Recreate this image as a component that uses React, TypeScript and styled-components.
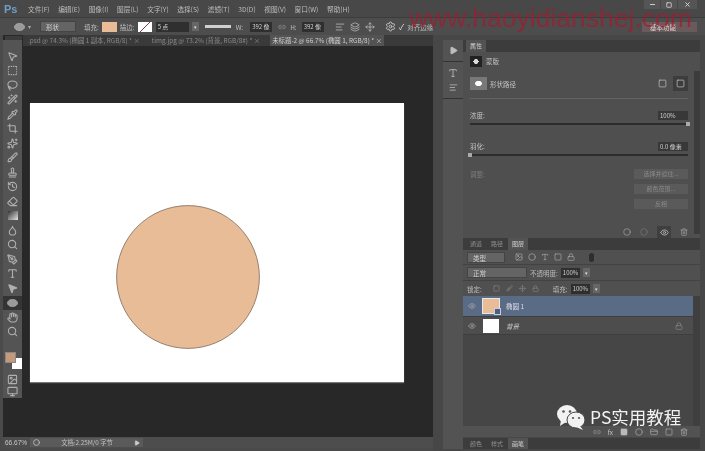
import React from "react";
import styled, { createGlobalStyle } from "styled-components";
import {
  Brush,
  Circle,
  Crop,
  Droplet,
  Eraser,
  Eye,
  FolderClosed,
  Hand,
  History,
  Link2,
  Lasso,
  Lock,
  Minus,
  Move,
  PenTool,
  Pipette,
  Search,
  Settings,
  SquareDashed,
  Stamp,
  Trash2,
  Type,
  Wand2,
  MousePointer2,
  Sparkles,
  AlignLeft,
  Layers,
  Image as ImageIcon,
  Square,
  Monitor,
  Play,
  X,
} from "lucide-react";

const GlobalStyle = createGlobalStyle`
  html, body {
    margin: 0;
    padding: 0;
    background: #4a4a4a;
  }
  body {
    font-family: "Noto Sans CJK SC", "Liberation Sans", sans-serif;
  }
`;

const menus = ["文件(F)", "编辑(E)", "图像(I)", "图层(L)", "文字(Y)", "选择(S)", "滤镜(T)", "3D(D)", "视图(V)", "窗口(W)", "帮助(H)"];

const EllipseGlyph: React.FC<{ fill?: string }> = ({ fill = "#9a9a9a" }) => (
  <svg width="11" height="8" viewBox="0 0 11 8">
    <ellipse cx="5.5" cy="4" rx="5" ry="3.6" fill={fill} stroke="#c4c4c4" strokeWidth="0.6" />
  </svg>
);

const GradientGlyph: React.FC = () => (
  <svg width="10" height="9" viewBox="0 0 10 9">
    <defs>
      <linearGradient id="tool-grad" x1="0" x2="1" y1="0" y2="1">
        <stop offset="0" stopColor="#333" />
        <stop offset="1" stopColor="#e4e4e4" />
      </linearGradient>
    </defs>
    <rect width="10" height="9" fill="url(#tool-grad)" />
  </svg>
);

const iconProps = { size: 11, color: "#b0b0b0", strokeWidth: 2.3 };

const tools: React.ReactNode[] = [
  <MousePointer2 {...iconProps} />,
  <SquareDashed {...iconProps} />,
  <Lasso {...iconProps} />,
  <Wand2 {...iconProps} />,
  <Pipette {...iconProps} />,
  <Crop {...iconProps} />,
  <Sparkles {...iconProps} />,
  <Brush {...iconProps} />,
  <Stamp {...iconProps} />,
  <History {...iconProps} />,
  <Eraser {...iconProps} />,
  <GradientGlyph />,
  <Droplet {...iconProps} />,
  <Search {...iconProps} />,
  <PenTool {...iconProps} />,
  <Type {...iconProps} />,
  <MousePointer2 {...iconProps} fill="#b0b0b0" />,
  <EllipseGlyph />,
  <Hand {...iconProps} />,
  <Search {...iconProps} />,
];

const App: React.FC = () => {
  return (
    <Root>
      <GlobalStyle />
      <MenuBar>
        <Logo>Ps</Logo>
        <MenuList>
          {menus.map((m) => (
            <MenuItem key={m}>{m}</MenuItem>
          ))}
        </MenuList>
        <WindowButtons>
          <WinBtn><Minus size={7} color="#e0e0e0" strokeWidth={3} /></WinBtn>
          <WinBtn><Square size={6} color="#e0e0e0" strokeWidth={3} /></WinBtn>
          <WinBtn $wide><X size={7} color="#e0e0e0" strokeWidth={3} /></WinBtn>
        </WindowButtons>
      </MenuBar>

      <OptionsBar>
        <EllipseGlyph />
        <Caret>▾</Caret>
        <Select $w={36}>形状</Select>
        <Label $ml={5}>填充:</Label>
        <Swatch $c="#e9bc98" />
        <Label>描边:</Label>
        <StrokeSwatch />
        <DarkField $w={33} $ml={1}>5 点</DarkField>
        <ArrowBtn>▾</ArrowBtn>
        <LineSelect />
        <Label $ml={2}>W:</Label>
        <DarkField $w={22} $ml={4}>392 像</DarkField>
        <OptLink><Link2 size={8} color="#999" /></OptLink>
        <Label $ml={1}>H:</Label>
        <DarkField $w={22} $ml={2}>392 像</DarkField>
        <OptIcons>
          <AlignLeft size={10} color="#b5b5b5" />
          <Layers size={10} color="#b5b5b5" />
          <Move size={10} color="#b5b5b5" />
        </OptIcons>
        <Settings size={11} color="#c8c8c8" />
        <Check>✓</Check>
        <Label>对齐边缘</Label>
        <Workspace>基本功能</Workspace>
      </OptionsBar>

      <Body>
        <LeftArea>
          <TopRow>
            <ToolColumn>
              <ToolGrip />
              <ToolBar>
                <ToolList>
                  {tools.map((t, i) => (
                    <ToolSlot key={i} $active={i === 17}>
                      {t}
                    </ToolSlot>
                  ))}
                </ToolList>
                <Swatches>
                  <BgSwatch />
                  <FgSwatch />
                </Swatches>
                <ToolSlot>
                  <ImageIcon {...iconProps} />
                </ToolSlot>
                <ToolSlot>
                  <Monitor {...iconProps} />
                </ToolSlot>
              </ToolBar>
            </ToolColumn>

            <Work>
              <TabBar>
                <DocTab>.psd @ 74.3% (椭圆 1 副本, RGB/8) * <span>×</span></DocTab>
                <DocTab>timg.jpg @ 73.2% (背景, RGB/8#) * <span>×</span></DocTab>
                <DocTab $active>未标题-2 @ 66.7% (椭圆 1, RGB/8) * <span>×</span></DocTab>
              </TabBar>
              <Canvas>
                <Doc>
                  <svg width="144" height="144" viewBox="0 0 144 144">
                    <circle cx="72" cy="72" r="71.4" fill="#e9bc98" stroke="#7d6a5a" strokeWidth="0.8" />
                  </svg>
                </Doc>
              </Canvas>
            </Work>
          </TopRow>
          <StatusBar>
            <Zoom>66.67%</Zoom>
            <StatusInfo>
              <Circle size={7} color="#bbb" strokeWidth={3} />
              <span>文档:2.25M/0 字节</span>
              <Play size={6} fill="#ccc" color="#ccc" />
            </StatusInfo>
          </StatusBar>
        </LeftArea>

        <Dock>
          <Strip>
            <StripIcon><Play size={9} fill="#bdbdbd" color="#bdbdbd" /></StripIcon>
            <StripRule />
            <StripIcon><Type size={10} color="#bdbdbd" /></StripIcon>
            <StripIcon><AlignLeft size={9} color="#bdbdbd" /></StripIcon>
            <StripRule />
          </Strip>
          <Panels>
            <PropsPanel>
              <PanelTabs>
                <PanelTab $active>属性</PanelTab>
              </PanelTabs>
              <PropsBody>
                <PropsContent>
                  <Row $h={14}>
                    <MaskIcon />
                    <SmallText>蒙版</SmallText>
                  </Row>
                  <ShapeRow>
                    <ShapeIcon />
                    <SmallText>形状路径</SmallText>
                    <Spacer />
                    <Square size={9} color="#bbb" />
                    <ShapeAction><Square size={9} color="#bbb" /></ShapeAction>
                  </ShapeRow>
                  <Rule />
                  <ValueRow>
                    <SmallText>浓度:</SmallText>
                    <ValueField>100%</ValueField>
                  </ValueRow>
                  <Slider $at="100%" />
                  <ValueRow>
                    <SmallText>羽化:</SmallText>
                    <ValueField>0.0 像素</ValueField>
                  </ValueRow>
                  <Slider $at="0%" />
                  <AdjustRow>
                    <DimText>调整:</DimText>
                    <ButtonStack>
                      <DimButton>选择并遮住...</DimButton>
                      <DimButton>颜色范围...</DimButton>
                      <DimButton>反相</DimButton>
                    </ButtonStack>
                  </AdjustRow>
                </PropsContent>
                <PropsFooter>
                  <Circle size={8} color="#a5a5a5" />
                  <Circle size={8} color="#777" />
                  <ActiveFoot><Eye size={9} color="#c5c5c5" /></ActiveFoot>
                  <Trash2 size={8} color="#a5a5a5" />
                </PropsFooter>
              </PropsBody>
              <ScrollTrack />
            </PropsPanel>

            <LayersPanel>
              <PanelTabs>
                <PanelTab>通道</PanelTab>
                <PanelTab>路径</PanelTab>
                <PanelTab $active>图层</PanelTab>
              </PanelTabs>
              <FilterRow>
                <Select $w={38}>类型</Select>
                <FilterIcons>
                  <ImageIcon size={8} color="#aaa" />
                  <Circle size={8} color="#aaa" />
                  <Type size={8} color="#aaa" />
                  <Square size={8} color="#aaa" />
                  <Lock size={8} color="#aaa" />
                </FilterIcons>
                <Dot />
              </FilterRow>
              <BlendRow>
                <Select $w={60}>正常</Select>
                <Label>不透明度:</Label>
                <DarkField $w={19}>100%</DarkField>
                <ArrowBtn>▾</ArrowBtn>
              </BlendRow>
              <BlendRow>
                <Label>锁定:</Label>
                <LockIcons>
                  <Square size={7} color="#888" />
                  <Brush size={7} color="#888" />
                  <Move size={7} color="#888" />
                  <Lock size={7} color="#888" />
                </LockIcons>
                <Label>填充:</Label>
                <DarkField $w={19}>100%</DarkField>
                <ArrowBtn>▾</ArrowBtn>
              </BlendRow>
              <LayerRow $selected>
                <Eye size={8} color="#a8a8a8" />
                <Thumb $c="#e9bc98" $sel><MaskBadge /></Thumb>
                <LayerName>椭圆 1</LayerName>
              </LayerRow>
              <LayerRow>
                <Eye size={8} color="#a8a8a8" />
                <Thumb $c="#ffffff" />
                <LayerNameItalic>背景</LayerNameItalic>
                <Spacer />
                <Lock size={8} color="#8d8d8d" />
              </LayerRow>
              <LayersEmpty />
              <LayersFooter>
                <Link2 size={8} color="#999" />
                <SmallText>fx</SmallText>
                <Square size={8} fill="#bbb" color="#bbb" />
                <Circle size={8} color="#aaa" />
                <FolderClosed size={8} color="#aaa" />
                <Square size={8} color="#aaa" />
                <Trash2 size={8} color="#aaa" />
              </LayersFooter>
            </LayersPanel>

            <BottomTabs>
              <PanelTab>颜色</PanelTab>
              <PanelTab>样式</PanelTab>
              <PanelTab $active>画笔</PanelTab>
            </BottomTabs>
          </Panels>
        </Dock>
      </Body>

      <Watermark>www.haoyidianshej.com</Watermark>
      <WeChatMark>
        <svg width="30" height="26" viewBox="0 0 30 26">
          <ellipse cx="11" cy="10" rx="10" ry="9" fill="#f2f2f2" />
          <path d="M5 16 L4 22 L10 18 Z" fill="#f2f2f2" />
          <ellipse cx="20" cy="16" rx="9" ry="8" fill="#f2f2f2" stroke="#444" strokeWidth="1" />
          <path d="M24 22 L27 26 L20 23 Z" fill="#f2f2f2" />
          <circle cx="7.5" cy="7.5" r="1.3" fill="#555" />
          <circle cx="14" cy="7.5" r="1.3" fill="#555" />
          <circle cx="17" cy="14" r="1.1" fill="#555" />
          <circle cx="23" cy="14" r="1.1" fill="#555" />
        </svg>
        <span>PS实用教程</span>
      </WeChatMark>
    </Root>
  );
};

const Root = styled.div`
  position: relative;
  width: 705px;
  height: 451px;
  overflow: hidden;
  background: #4a4a4a;
  color: #c8c8c8;
  font-size: 7px;
  filter: blur(0.5px);
  display: flex;
  flex-direction: column;
`;

const MenuBar = styled.div`
  height: 17px;
  display: flex;
  align-items: center;
  background: #484848;
`;

const Logo = styled.div`
  width: 24px;
  padding-left: 4px;
  box-sizing: border-box;
  color: #6f9fc9;
  font-family: "Liberation Sans", sans-serif;
  font-weight: bold;
  font-size: 11px;
`;

const MenuList = styled.div`
  display: flex;
  gap: 8.6px;
  padding-left: 4px;
`;

const MenuItem = styled.span`
  font-size: 6.7px;
  color: #bdbdbd;
  white-space: nowrap;
`;

const WindowButtons = styled.div`
  margin-left: auto;
  display: flex;
  margin-right: 8px;
  gap: 1px;
  align-self: flex-start;
`;

const WinBtn = styled.div<{ $wide?: boolean }>`
  width: ${(p) => (p.$wide ? 19 : 16)}px;
  height: 9px;
  display: flex;
  align-items: center;
  justify-content: center;
  background: #555;
`;

const OptionsBar = styled.div`
  height: 18px;
  display: flex;
  align-items: center;
  gap: 3px;
  padding-left: 14px;
  padding-right: 8px;
  background: #4d4d4d;
  border-top: 1px solid #3c3c3c;
  box-sizing: border-box;
`;

const Caret = styled.span`
  font-size: 6px;
  color: #aaa;
  margin-right: 6px;
`;

const Select = styled.div<{ $w: number }>`
  width: ${(p) => p.$w}px;
  height: 11px;
  line-height: 10px;
  padding-left: 5px;
  box-sizing: border-box;
  flex-shrink: 0;
  background: #646464;
  border: 1px solid #444;
  font-size: 6.5px;
  color: #d0d0d0;
`;

const Label = styled.span<{ $ml?: number }>`
  margin-left: ${(p) => p.$ml ?? 0}px;
  font-size: 6.5px;
  color: #bdbdbd;
  white-space: nowrap;
`;

const Swatch = styled.div<{ $c: string }>`
  width: 15px;
  height: 10px;
  background: ${(p) => p.$c};
`;

const StrokeSwatch = styled.div`
  width: 14px;
  height: 10px;
  background: linear-gradient(135deg, #fff 46%, #b33 46%, #444 54%, #fff 54%);
`;

const DarkField = styled.div<{ $w: number; $ml?: number }>`
  width: ${(p) => p.$w}px;
  margin-left: ${(p) => p.$ml ?? 0}px;
  height: 10px;
  line-height: 10px;
  padding-left: 2px;
  box-sizing: border-box;
  flex-shrink: 0;
  background: #2f2f2f;
  font-size: 6px;
  color: #d0d0d0;
  white-space: nowrap;
  overflow: hidden;
`;

const ArrowBtn = styled.div`
  width: 7px;
  height: 9px;
  line-height: 9px;
  text-align: center;
  background: #666;
  font-size: 5px;
  color: #ddd;
`;

const LineSelect = styled.div`
  width: 26px;
  height: 3px;
  margin-left: 3px;
  background: #cfcfcf;
`;

const OptLink = styled.div`
  display: flex;
  margin-left: 3px;
`;

const OptIcons = styled.div`
  display: flex;
  gap: 5px;
  margin: 0 7px 0 8px;
`;

const Check = styled.span`
  font-size: 8px;
  color: #ddd;
`;

const Workspace = styled.div`
  margin-left: auto;
  width: 55px;
  height: 10px;
  line-height: 10px;
  padding-left: 8px;
  box-sizing: border-box;
  background: #6a5a5c;
  font-size: 6.5px;
  color: #e0d0d0;
`;

const Body = styled.div`
  flex: 1;
  min-height: 0;
  display: flex;
`;

const LeftArea = styled.div`
  width: 433px;
  flex-shrink: 0;
  display: flex;
  flex-direction: column;
  padding-bottom: 3px;
  box-sizing: border-box;
`;

const TopRow = styled.div`
  flex: 1;
  min-height: 0;
  display: flex;
`;

const ToolColumn = styled.div`
  width: 20px;
  margin-left: 3px;
  flex-shrink: 0;
  padding: 1px 1px 0 0;
  box-sizing: border-box;
  background: #282828;
`;

const ToolGrip = styled.div`
  height: 4px;
  margin-left: 2px;
  background: #3c3c3c;
`;

const ToolBar = styled.div`
  width: 19px;
  height: 358px;
  padding-top: 9px;
  box-sizing: border-box;
  background: #545454;
  display: flex;
  flex-direction: column;
  align-items: center;
`;

const ToolList = styled.div`
  display: flex;
  flex-direction: column;
  align-items: center;
  margin-bottom: 13px;
`;

const ToolSlot = styled.div<{ $active?: boolean }>`
  width: 19px;
  height: 14.5px;
  display: flex;
  align-items: center;
  justify-content: center;
  background: ${(p) => (p.$active ? "#343434" : "transparent")};
`;

const Swatches = styled.div`
  position: relative;
  width: 16px;
  height: 17px;
  margin-bottom: 6px;
`;

const FgSwatch = styled.div`
  position: absolute;
  left: 0;
  top: 0;
  width: 11px;
  height: 11px;
  background: #c69a78;
  border: 1px solid #888;
  box-sizing: border-box;
`;

const BgSwatch = styled.div`
  position: absolute;
  left: 7px;
  top: 6px;
  width: 10px;
  height: 11px;
  background: #ffffff;
`;

const Work = styled.div`
  flex: 1;
  min-width: 0;
  display: flex;
  flex-direction: column;
`;

const TabBar = styled.div`
  height: 11px;
  display: flex;
  align-items: stretch;
  padding-left: 3px;
  background: #3a3a3a;
`;

const DocTab = styled.div<{ $active?: boolean }>`
  padding: 0 2px;
  margin-right: ${(p) => (p.$active ? "0" : "8px")};
  line-height: 11px;
  font-size: 6.4px;
  white-space: nowrap;
  color: ${(p) => (p.$active ? "#d0d0d0" : "#8a8a8a")};
  background: ${(p) => (p.$active ? "#535353" : "transparent")};
`;

const Canvas = styled.div`
  flex: 1;
  min-height: 0;
  background: #282828;
  padding: 57px 0 0 7px;
  box-sizing: border-box;
`;

const Doc = styled.div`
  width: 374px;
  height: 279px;
  background: #ffffff;
  padding: 102px 0 0 86px;
  box-sizing: border-box;
  box-shadow: 0 1px 1px #777;
`;

const StatusBar = styled.div`
  height: 11px;
  flex-shrink: 0;
  margin-left: 3px;
  display: flex;
  align-items: center;
  background: #4d4d4d;
`;

const Zoom = styled.div`
  width: 27px;
  padding-left: 2px;
  box-sizing: border-box;
  font-family: "Liberation Sans", sans-serif;
  font-size: 6.5px;
  color: #c8c8c8;
`;

const StatusInfo = styled.div`
  width: 113px;
  height: 9px;
  display: flex;
  align-items: center;
  justify-content: space-between;
  padding: 0 3px;
  box-sizing: border-box;
  font-size: 6.3px;
  color: #c0c0c0;
  background: #5a5a5a;
`;

const Dock = styled.div`
  flex: 1;
  display: flex;
  padding: 5px 5px 2px 10px;
  background: #474747;
  box-sizing: border-box;
`;

const Strip = styled.div`
  width: 20px;
  flex-shrink: 0;
  background: #535353;
  padding-top: 3px;
  box-sizing: border-box;
`;

const StripIcon = styled.div`
  height: 15px;
  display: flex;
  align-items: center;
  justify-content: center;
`;

const StripRule = styled.div`
  height: 1px;
  margin: 3px 0;
  background: #333;
`;

const Panels = styled.div`
  flex: 1;
  min-width: 0;
  display: flex;
  flex-direction: column;
`;

const PropsPanel = styled.div`
  height: 198px;
  flex-shrink: 0;
  position: relative;
  background: #4f4f4f;
  display: flex;
  flex-direction: column;
`;

const PanelTabs = styled.div`
  height: 12px;
  flex-shrink: 0;
  display: flex;
  padding-left: 3px;
  gap: 1px;
  background: #3c3c3c;
`;

const PanelTab = styled.div<{ $active?: boolean }>`
  width: 20px;
  text-align: center;
  line-height: 12px;
  font-size: 6px;
  color: ${(p) => (p.$active ? "#d0d0d0" : "#909090")};
  background: ${(p) => (p.$active ? "#535353" : "transparent")};
`;

const PropsBody = styled.div`
  flex: 1;
  display: flex;
  flex-direction: column;
  padding-right: 6px;
`;

const PropsContent = styled.div`
  flex: 1;
  padding: 2px 6px 0 7px;
`;

const Row = styled.div<{ $h: number }>`
  height: ${(p) => p.$h}px;
  display: flex;
  align-items: center;
  gap: 4px;
`;

const ShapeRow = styled(Row).attrs({ $h: 15 })`
  margin-top: 8px;
  gap: 3px;
`;

const ShapeAction = styled.div`
  display: flex;
  padding: 3px;
  margin-left: 3px;
  background: #3d3d3d;
`;

const MaskIcon = styled.div`
  width: 12px;
  height: 11px;
  background: radial-gradient(#ddd 30%, #222 32%);
`;

const ShapeIcon = styled.div`
  width: 17px;
  height: 13px;
  background: radial-gradient(#fff 26%, #787878 30%);
`;

const SmallText = styled.span`
  font-size: 6.5px;
  color: #c4c4c4;
`;

const DimText = styled(SmallText)`
  color: #7d7d7d;
`;

const Spacer = styled.div`
  flex: 1;
`;

const Rule = styled.div`
  height: 1px;
  margin: 7px 0 11px;
  background: #626262;
`;

const ValueRow = styled.div`
  display: flex;
  align-items: center;
  justify-content: space-between;
  height: 10px;
`;

const ValueField = styled.div`
  width: 30px;
  height: 9px;
  line-height: 9px;
  padding-left: 2px;
  box-sizing: border-box;
  font-size: 6px;
  white-space: nowrap;
  color: #d0d0d0;
  background: #383838;
`;

const Slider = styled.div<{ $at: string }>`
  position: relative;
  height: 2px;
  margin: 3px 0 16px;
  background: #2c2c2c;

  &::after {
    content: "";
    position: absolute;
    top: -1px;
    left: ${(p) => p.$at};
    margin-left: -2px;
    width: 4px;
    height: 4px;
    background: #aaa;
  }
`;

const AdjustRow = styled.div`
  display: flex;
  justify-content: space-between;
  margin-top: -3px;
`;

const ButtonStack = styled.div`
  display: flex;
  flex-direction: column;
  gap: 5px;
`;

const DimButton = styled.div`
  width: 54px;
  height: 10px;
  line-height: 10px;
  text-align: center;
  font-size: 6px;
  color: #8a8a8a;
  background: #5a5a5a;
`;

const PropsFooter = styled.div`
  height: 12px;
  display: flex;
  align-items: center;
  justify-content: flex-end;
  gap: 9px;
  padding-right: 6px;
`;

const ActiveFoot = styled.div`
  width: 14px;
  height: 12px;
  display: flex;
  align-items: center;
  justify-content: center;
  background: #3f3f3f;
`;

const ScrollTrack = styled.div`
  position: absolute;
  right: 0;
  top: 31px;
  bottom: 4px;
  width: 6px;
  background: #3c3c3c;
`;

const LayersPanel = styled.div`
  flex: 1;
  min-height: 0;
  display: flex;
  flex-direction: column;
  background: #3f3f3f;
`;

const FilterRow = styled.div`
  height: 14px;
  flex-shrink: 0;
  display: flex;
  align-items: center;
  padding-left: 4px;
  gap: 10px;
  background: #505050;
`;

const FilterIcons = styled.div`
  display: flex;
  gap: 5px;
`;

const Dot = styled.div`
  width: 5px;
  height: 9px;
  margin-left: 4px;
  border-radius: 3px;
  background: #2e2e2e;
`;

const BlendRow = styled.div`
  height: 16px;
  flex-shrink: 0;
  display: flex;
  align-items: center;
  gap: 3px;
  padding-left: 4px;
  background: #505050;
  border-top: 1px solid #424242;
  box-sizing: border-box;
`;

const LockIcons = styled.div`
  display: flex;
  gap: 6px;
  margin: 0 11px 0 8px;
`;

const LayerRow = styled.div<{ $selected?: boolean }>`
  height: ${(p) => (p.$selected ? 21 : 18)}px;
  flex-shrink: 0;
  margin-right: 7px;
  display: flex;
  align-items: center;
  gap: 7px;
  padding: 0 10px 0 5px;
  background: ${(p) => (p.$selected ? "#5a6b85" : "#4d4d4d")};
  border-bottom: 1px solid #3e3e3e;
  box-sizing: border-box;
`;

const Thumb = styled.div<{ $c: string; $sel?: boolean }>`
  position: relative;
  width: 16px;
  height: 14px;
  background: ${(p) => p.$c};
  outline: ${(p) => (p.$sel ? "1px solid #e8e8e8" : "none")};
`;

const MaskBadge = styled.div`
  position: absolute;
  right: -2px;
  bottom: -2px;
  width: 7px;
  height: 7px;
  background: #4d5f7c;
  border: 1px solid #ccd;
  box-sizing: border-box;
`;

const LayerName = styled.span`
  font-size: 6.5px;
  color: #dde;
`;

const LayerNameItalic = styled(LayerName)`
  font-style: italic;
  color: #d0d0d0;
`;

const LayersEmpty = styled.div`
  flex: 1;
  margin-right: 7px;
  background: #464646;
`;

const LayersFooter = styled.div`
  height: 11px;
  flex-shrink: 0;
  display: flex;
  align-items: center;
  justify-content: flex-end;
  gap: 7px;
  padding-right: 12px;
  background: #525252;
`;

const BottomTabs = styled(PanelTabs)`
  height: 11px;
  margin-top: 1px;
`;

const Watermark = styled.div`
  position: absolute;
  left: 409px;
  top: 3px;
  font-family: "Liberation Sans", sans-serif;
  font-size: 26.5px;
  line-height: 30px;
  white-space: nowrap;
  color: rgba(165, 25, 45, 0.68);
`;

const WeChatMark = styled.div`
  position: absolute;
  left: 556px;
  top: 404px;
  display: flex;
  align-items: center;
  gap: 4px;
  font-size: 17.5px;
  line-height: 26px;
  color: #f2f2f2;
`;

export default App;
